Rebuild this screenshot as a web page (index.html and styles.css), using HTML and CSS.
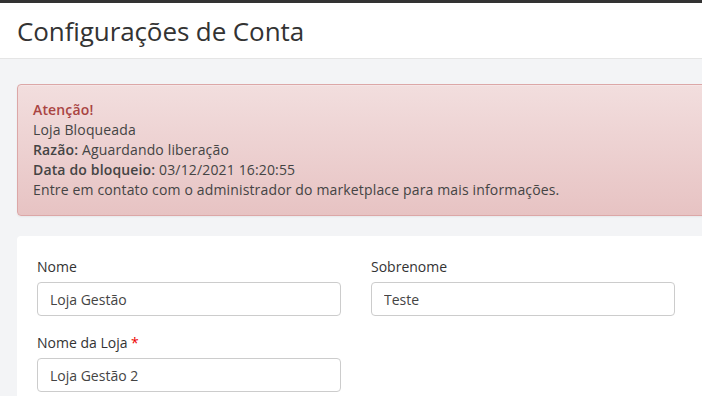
FILE: index.html
```html
<!DOCTYPE html>
<html lang="pt-BR">
<head>
    <meta charset="UTF-8">
    <meta name="viewport" content="width=device-width, initial-scale=1.0">
    <title>Configurações de Conta</title>
    <link rel="stylesheet" href="styles.css">
</head>
<body>
    <div class="page-header">
        <h1>Configurações de Conta</h1>
    </div>

    <div class="content">
        <div class="alert alert-danger">
            <strong class="alert-title">Atenção!</strong><br>
            Loja Bloqueada<br>
            <strong>Razão:</strong> Aguardando liberação<br>
            <strong>Data do bloqueio:</strong> 03/12/2021 16:20:55<br>
            Entre em contato com o administrador do marketplace para mais informações.
        </div>

        <div class="card">
            <div class="row">
                <div class="form-group">
                    <label for="nome">Nome</label>
                    <input type="text" id="nome" class="form-control" value="Loja Gestão">
                </div>
                <div class="form-group">
                    <label for="sobrenome">Sobrenome</label>
                    <input type="text" id="sobrenome" class="form-control" value="Teste">
                </div>
            </div>
            <div class="row">
                <div class="form-group">
                    <label for="loja">Nome da Loja <span class="required">*</span></label>
                    <input type="text" id="loja" class="form-control" value="Loja Gestão 2">
                </div>
            </div>
        </div>
    </div>
</body>
</html>
```

FILE: styles.css
```css
body {
    margin: 0;
    font-family: 'Open Sans', 'Noto Sans', sans-serif;
    font-size: 14px;
    line-height: 20px;
    color: #333;
    background: #f3f4f6;
    border-top: 3px solid #333;
    overflow: hidden;
}

.page-header {
    background: #fff;
    border-bottom: 1px solid #e5e5e5;
    height: 55px;
    padding: 0 17px;
    display: flex;
    align-items: center;
}

.page-header h1 {
    margin: 0;
    font-size: 26px;
    font-weight: 400;
    color: #333;
    letter-spacing: -0.1px;
}

.content {
    width: 720px;
    padding: 25px 0 0 17px;
}

.alert {
    padding: 15px;
    border: 1px solid #dca7a7;
    border-radius: 4px;
    margin-bottom: 20px;
    color: #444;
    letter-spacing: 0.15px;
}

.alert-danger {
    background: linear-gradient(to bottom, #f2dede 0, #e7c3c3 100%);
    box-shadow: inset 0 1px 0 rgba(255, 255, 255, 0.25), 0 1px 2px rgba(0, 0, 0, 0.05);
}

.alert strong {
    font-weight: 600;
}

.alert .alert-title {
    color: #a94442;
}

.card {
    background: #fff;
    border-radius: 4px;
    padding: 20px;
}

.row {
    display: flex;
    gap: 30px;
}

.form-group {
    width: 304px;
    margin-bottom: 16px;
}

.form-group label {
    display: block;
    line-height: 21px;
    margin-bottom: 5px;
    color: #333;
}

.required {
    color: #e00;
}

.form-control {
    box-sizing: border-box;
    display: block;
    width: 100%;
    height: 34px;
    padding: 6px 12px;
    font-family: inherit;
    font-size: 14px;
    color: #444;
    background: #fff;
    border: 1px solid #ccc;
    border-radius: 4px;
}
```
